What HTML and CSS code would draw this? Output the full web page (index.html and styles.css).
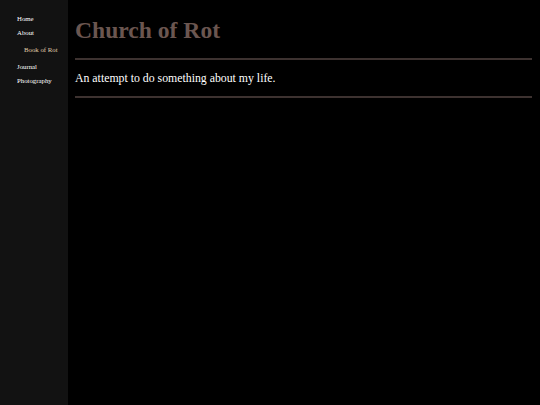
FILE: index.html
```html
<!DOCTYPE html>
<html>
<head>
<meta charset="utf-8">
<link rel="stylesheet" href="styles.css">
</head>
<body>
<nav class="sidebar">
  <ul class="nav">
    <li><a href="#">Home</a></li>
    <li><a href="#">About</a>
      <ul class="sub">
        <li><a href="#" class="current">Book of Rot</a></li>
      </ul>
    </li>
    <li><a href="#">Journal</a></li>
    <li><a href="#">Photography</a></li>
  </ul>
</nav>
<main class="main">
  <h1 class="title">Church of Rot</h1>
  <hr class="rule">
  <p class="lead">An attempt to do something about my life.</p>
  <hr class="rule">
</main>
</body>
</html>
```
FILE: styles.css
```css
html, body {
  margin: 0;
  padding: 0;
  height: 100%;
  background: #000;
}
body {
  display: flex;
  font-family: "Liberation Serif", "Times New Roman", serif;
  color: #fff;
}
.sidebar {
  width: 68px;
  flex: none;
  background: #121212;
  min-height: 100%;
}
.nav {
  list-style: none;
  margin: 0;
  padding: 14px 0 0 17px;
  font-size: 6.8px;
  line-height: 9px;
}
.nav li {
  margin-bottom: 5px;
}
.nav a {
  color: #ffffff;
  text-decoration: none;
}
.sub {
  list-style: none;
  margin: 8px 0 0 0;
  padding: 0 0 0 7px;
}
.sub li { margin-bottom: 8px; }
.sub a.current {
  color: #e0cfaa;
}
.main {
  flex: 1;
  padding: 0 8px 0 7px;
}
.title {
  margin: 16px 0 0 0;
  font-size: 23.6px;
  line-height: 28px;
  font-weight: bold;
  color: #6b5650;
}
.rule {
  border: none;
  height: 2px;
  background: #3d3230;
  margin: 14px 0 0 0;
}
.lead {
  margin: 11px 0 0 0;
  font-size: 11.8px;
  line-height: 14px;
}
.lead + .rule { margin-top: 11px; }
```
